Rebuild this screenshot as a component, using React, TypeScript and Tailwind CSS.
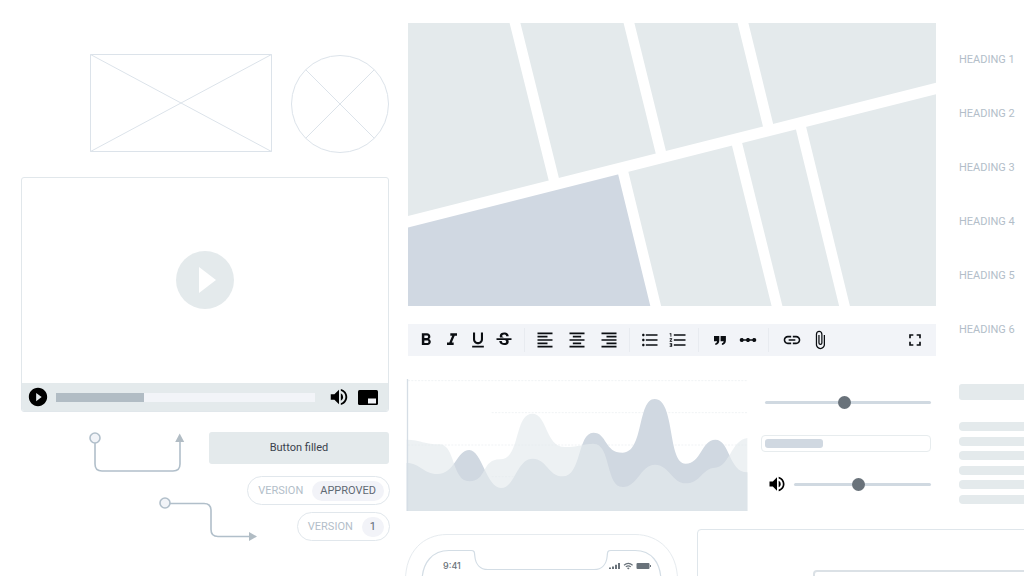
import React from "react";
import {
  MdAttachFile,
  MdFormatAlignCenter,
  MdFormatAlignLeft,
  MdFormatAlignRight,
  MdFormatBold,
  MdFormatItalic,
  MdFormatListBulleted,
  MdFormatListNumbered,
  MdFormatUnderlined,
  MdFullscreen,
  MdInsertLink,
  MdLinearScale,
  MdPlayCircleFilled,
  MdStrikethroughS,
  MdVolumeUp,
} from "react-icons/md";

const HEADINGS = ["HEADING 1", "HEADING 2", "HEADING 3", "HEADING 4", "HEADING 5", "HEADING 6"];

const RANGE_CLASS =
  "block h-[13px] min-w-0 flex-1 appearance-none bg-transparent [&::-webkit-slider-runnable-track]:h-[3px] [&::-webkit-slider-runnable-track]:rounded-full [&::-webkit-slider-runnable-track]:bg-[#d0d9e1] [&::-webkit-slider-thumb]:-mt-[5px] [&::-webkit-slider-thumb]:size-[13px] [&::-webkit-slider-thumb]:appearance-none [&::-webkit-slider-thumb]:rounded-full [&::-webkit-slider-thumb]:bg-[#69727a]";

function QuoteIcon() {
  return (
    <svg viewBox="0 0 12 9" className="h-[9px] w-3" fill="currentColor">
      <path d="M0 0h5.3v4.6C5.3 7.2 4 8.8 1.3 9V7.3C2.6 7 3 6.300 3 5.200H0z" />
      <path d="M6.600 0h5.300v4.600c0 2.600-1.300 4.200-4 4.400V7.300c1.300-.3 1.700-1 1.700-2.100h-3z" />
    </svg>
  );
}

const TOOLBAR_GROUPS = [
  {
    className: "flex gap-[6px]",
    items: [
      { label: "Bold", icon: <MdFormatBold size={20} /> },
      { label: "Italic", icon: <MdFormatItalic size={20} /> },
      { label: "Underline", icon: <MdFormatUnderlined size={20} /> },
      { label: "Strikethrough", icon: <MdStrikethroughS size={20} /> },
    ],
  },
  {
    className: "flex gap-3",
    items: [
      { label: "Align left", icon: <MdFormatAlignLeft size={20} /> },
      { label: "Align center", icon: <MdFormatAlignCenter size={20} /> },
      { label: "Align right", icon: <MdFormatAlignRight size={20} /> },
    ],
  },
  {
    className: "flex gap-2",
    items: [
      { label: "Bulleted list", icon: <MdFormatListBulleted size={20} /> },
      { label: "Numbered list", icon: <MdFormatListNumbered size={20} /> },
    ],
  },
  {
    className: "flex gap-2 pl-px",
    items: [
      { label: "Quote", icon: <QuoteIcon /> },
      { label: "Divider", icon: <MdLinearScale size={20} /> },
    ],
  },
  {
    className: "flex gap-2 pl-[3px]",
    items: [
      { label: "Link", icon: <MdInsertLink size={20} /> },
      { label: "Attach file", icon: <MdAttachFile size={20} /> },
    ],
  },
];

function Placeholders() {
  return (
    <div className="flex justify-end gap-[19px]">
      <svg viewBox="0 0 182 98" className="h-[98px] w-[182px]" fill="none" stroke="#dce3ea">
        <path d="M.5 .5h181v97H.5zM.5 .5l181 97M181.500 .5L.5 97.500" />
      </svg>
      <svg viewBox="0 0 98 98" className="mt-px h-[98px] w-[98px]" fill="none" stroke="#dce3ea">
        <circle cx="49" cy="49" r="48.500" />
        <path d="M14.700 14.700l68.600 68.600M83.300 14.700L14.700 83.300" />
      </svg>
    </div>
  );
}

function VideoPlayer() {
  return (
    <section className="mt-6 overflow-hidden rounded-[3px] border border-[#e1e7eb]">
      <div className="flex h-[205px] items-center justify-center pb-px">
        <button type="button" aria-label="Play video">
          <svg viewBox="0 0 58 58" className="size-[58px]">
            <circle cx="29" cy="29" r="29" fill="#e4eaec" />
            <path d="M23 16v26l17-13z" fill="#fff" />
          </svg>
        </button>
      </div>
      <div className="flex h-7 items-center bg-[#e4eaec] pr-[10px] pl-[5px] text-black">
        <button type="button" aria-label="Play">
          <MdPlayCircleFilled size={22} />
        </button>
        <div className="ml-[7px] h-[9px] flex-1 bg-[#f2f4f8]">
          <div className="h-full w-[34%] bg-[#b1bcc4]" />
        </div>
        <button type="button" aria-label="Volume" className="ml-[13px]">
          <MdVolumeUp size={22} />
        </button>
        <button type="button" aria-label="Picture in picture" className="ml-2">
          <svg viewBox="0 0 20 15" className="h-[15px] w-5">
            <rect width="20" height="15" rx="1.500" />
            <path d="M10 8.500h8v5h-8z" fill="#f2f4f8" />
          </svg>
        </button>
      </div>
    </section>
  );
}

function Connectors() {
  return (
    <svg viewBox="0 0 188 112" className="h-[112px] w-[188px] shrink-0 overflow-visible" fill="none" stroke="#b1bfca" strokeWidth="1.600">
      <path d="M74 11v21q0 7 7 7h71q7 0 7-7V8" />
      <path d="M158.700 1.500l4.500 8.500h-9z" fill="#b1bcc4" stroke="none" />
      <circle cx="74" cy="6" r="5" fill="#f2f4f8" />
      <path d="M149 71.500h34q7 0 7 7v19q0 7 7 7h32" />
      <path d="M236 104.500l-8 -4.500v9z" fill="#b1bcc4" stroke="none" />
      <circle cx="144" cy="71" r="5" fill="#f2f4f8" />
    </svg>
  );
}

function VersionChip({ value }: { value: string }) {
  return (
    <div className="flex h-[29px] items-center gap-[9px] rounded-full border border-[#e1e7ec] pr-[5px] pl-[10px] text-[11px] leading-5">
      <span className="text-[#b3bec9]">VERSION</span>
      <span className="rounded-full bg-[#f2f3f8] px-2 text-[#5f6973]">{value}</span>
    </div>
  );
}

function MapBlock() {
  return (
    <svg viewBox="0 0 528 283" className="block h-auto w-full">
      <path d="M0 0h528v283H0z" fill="#e4eaec" />
      <path d="M0 199L212 145l35.500 138H0z" fill="#d0d8e2" />
      <g stroke="#fff">
        <path d="M-6 200.300L534 64" strokeWidth="11" />
        <path d="M106 -4l40.500 163M220 -4l34 138M334 -4l27 110" strokeWidth="10.500" />
        <path d="M248.700 287L214 145M370 287L328 117M437.500 287L392 101" strokeWidth="10.500" />
      </g>
    </svg>
  );
}

function Toolbar() {
  return (
    <div role="toolbar" className="mt-[18px] flex h-8 items-center bg-[#f2f4f8] px-2 text-[#0b0e12]">
      {TOOLBAR_GROUPS.map((group, index) => (
        <React.Fragment key={group.items[0].label}>
          {index > 0 && <div className="mx-[10px] h-6 w-px bg-[#e8ebf0]" />}
          <div className={group.className}>
            {group.items.map((item) => (
              <button key={item.label} type="button" aria-label={item.label} className="flex size-5 items-center justify-center">
                {item.icon}
              </button>
            ))}
          </div>
        </React.Fragment>
      ))}
      <button type="button" aria-label="Fullscreen" className="mr-[3px] ml-auto">
        <MdFullscreen size={20} />
      </button>
    </div>
  );
}

function AreaChart() {
  return (
    <svg viewBox="18 27 1026 396" className="h-[132px] min-w-0 flex-[342]" preserveAspectRatio="none">
      <path d="M24 32H1042M275 128H1042M24 225H1042M275 320H350" stroke="#f0f3f5" strokeWidth="3" strokeDasharray="6 4" />
      <path
        fill="#d0d8e1"
        d="M20 279C60 279 70 312 112 312C165 312 170 240 208 240C245 240 260 354 303 354C345 354 350 266 398 266C440 266 445 319 488 319C545 319 532 188 580 188C622 188 612 248 668 248C732 248 712 87 764 87C826 87 802 281 857 281C903 281 905 209 946 209C990 209 986 307 1042 307V423H20z"
      />
      <path
        fill="#e4e9ed"
        fillOpacity=".66"
        d="M20 209C60 210 75 223 120 223C167 226 155 334 208 334C262 334 243 268 300 268C362 268 342 131 397 131C442 131 436 231 495 231C540 231 550 221 580 221C634 221 616 351 668 351C713 351 722 284 765 284C807 284 817 340 857 340C902 340 908 293 945 293C989 290 994 210 1042 204V423H20z"
      />
      <path d="M22.500 27V423" stroke="#d5dde5" strokeWidth="4" />
    </svg>
  );
}

function Controls() {
  return (
    <div className="min-w-0 flex-[170]">
      <div className="mt-[17px] flex pl-1">
        <input type="range" aria-label="Amount" min={0} max={100} defaultValue={48} className={RANGE_CLASS} />
      </div>
      <div className="mt-[26px] h-[17px] rounded-[4px] border border-[#e7ecee] p-[3px]">
        <div className="h-[9px] w-[36%] rounded-[3px] bg-[#d0d8e1]" />
      </div>
      <div className="mt-[22px] flex items-center gap-[7px] pl-[6px] text-black">
        <MdVolumeUp size={20} />
        <input type="range" aria-label="Volume" min={0} max={100} defaultValue={47} className={RANGE_CLASS} />
      </div>
    </div>
  );
}

function TextPlaceholder() {
  return (
    <div className="-mr-2 mt-[27px]">
      <div className="h-4 rounded-[3px] bg-[#e4eaec]" />
      <div className="mt-[22px] flex h-[82px] flex-col justify-between">
        {HEADINGS.map((heading) => (
          <div key={heading} className="h-[9px] rounded-[4px] bg-[#e4eaec]" />
        ))}
      </div>
    </div>
  );
}

function PhoneFrame() {
  return (
    <div className="mt-[5px] grid w-[273px] shrink-0">
      <svg viewBox="0 0 273 60" className="col-start-1 row-start-1 h-[60px] w-full" fill="none">
        <path d="M.5 60V46C.5 18 18 .5 42 .5H230C254 .5 272.500 18 272.500 46V60" stroke="#e6ebef" />
        <path
          d="M17 60V48C17 28 28 16.500 44 16.500H66C69.500 16.500 69.500 18 69.800 22C70.500 30 75 35.500 83 35.500H189C197 35.500 201.500 30 202.200 22C202.500 18 202.500 16.500 206 16.500H230C246 16.500 256 28 256 48V60"
          stroke="#d3dde5"
          strokeWidth="1.200"
        />
      </svg>
      <div className="col-start-1 row-start-1 mt-[26px] flex h-3 items-center justify-between self-start pr-[27px] pl-[38px] text-[#69727a]">
        <span className="font-[Inter,sans-serif] text-[9px] font-medium">9:41</span>
        <svg viewBox="0 0 42 8" className="h-2 w-[42px]" fill="currentColor">
          <path d="M0 5.500h2V7H0zM3 4.500h2V7H3zM6 2.800h2V7H6zM9 1h2v6H9z" />
          <g fill="none" stroke="currentColor" strokeWidth="1.200">
            <path d="M15 3.200q4.300-3.600 8.600 0M16.800 4.900q2.500-2 5 0" />
          </g>
          <path d="M19.300 7.500l-1.400-1.400q1.400-1 2.800 0z" />
          <rect x="27.500" y="1" width="13" height="6" rx="1" />
          <path d="M41 3h1v2h-1z" />
        </svg>
      </div>
    </div>
  );
}

export default function App() {
  return (
    <div className="grid h-screen grid-cols-[368fr_619fr] gap-4 overflow-hidden bg-white pl-[21px] font-[Roboto,'Liberation_Sans',sans-serif]">
      <div className="min-w-0 pt-[54px]">
        <Placeholders />
        <VideoPlayer />
        <div className="mt-5 flex">
          <Connectors />
          <div className="flex min-w-0 flex-1 flex-col items-end">
            <button type="button" className="h-8 w-full rounded-[3px] bg-[#e4eaec] text-[11px] text-[#3a424c]">
              Button filled
            </button>
            <div className="mt-3 -mr-px flex flex-col items-end gap-[7px]">
              <VersionChip value="APPROVED" />
              <VersionChip value="1" />
            </div>
          </div>
        </div>
      </div>

      <div className="min-w-0">
        <div className="grid grid-cols-[531fr_65fr] gap-[23px]">
          <div className="min-w-0 pt-[23px]">
            <div className="pl-[3px]">
              <MapBlock />
              <Toolbar />
            </div>
            <div className="mt-[23px] flex gap-[13px] pr-[5px] pl-px">
              <AreaChart />
              <Controls />
            </div>
          </div>
          <div className="min-w-0 pt-[33px]">
            {HEADINGS.map((heading) => (
              <h2 key={heading} className="flex h-[54px] items-center text-[11px] whitespace-nowrap text-[#b3bec9]">
                {heading}
              </h2>
            ))}
            <TextPlaceholder />
          </div>
        </div>

        <div className="mt-[18px] flex gap-[19px]">
          <PhoneFrame />
          <div className="-mr-2 flex-1 rounded-tl-[4px] border border-[#dfe6eb] pt-10 pl-[115px]">
            <div className="h-20 rounded-tl-[4px] border-2 border-[#dbe1e6]" />
          </div>
        </div>
      </div>
    </div>
  );
}
